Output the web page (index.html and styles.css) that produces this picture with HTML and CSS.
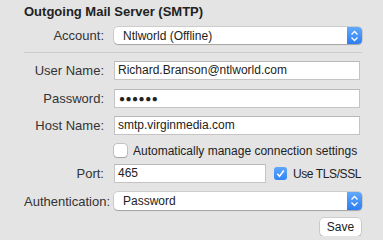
FILE: index.html
```html
<!DOCTYPE html>
<html lang="en">
<head>
  <meta charset="UTF-8" />
  <title>Outgoing Mail Server</title>
  <link rel="stylesheet" href="styles.css">
</head>
<body>
  <div class="panel">
    <h1 class="title">Outgoing Mail Server (SMTP)</h1>

    <div class="row row-account">
      <label class="label">Account:</label>
      <div class="popup">
        <span class="popup-text">Ntlworld (Offline)</span>
        <span class="popup-arrows">
          <svg width="9" height="12" viewBox="0 0 9 12"><path d="M1.5 4.5 L4.5 1.5 L7.5 4.5 M1.5 7.5 L4.5 10.5 L7.5 7.5" fill="none" stroke="#fff" stroke-width="1.3"/></svg>
        </span>
      </div>
    </div>

    <div class="separator"></div>

    <div class="row row-field first">
      <label class="label">User Name:</label>
      <div class="field">Richard.Branson@ntlworld.com</div>
    </div>

    <div class="row row-field">
      <label class="label">Password:</label>
      <div class="field dots">●●●●●●</div>
    </div>

    <div class="row row-field last">
      <label class="label">Host Name:</label>
      <div class="field">smtp.virginmedia.com</div>
    </div>

    <div class="row row-check">
      <span class="label"></span>
      <span class="checkbox"></span>
      <span class="check-text">Automatically manage connection settings</span>
    </div>

    <div class="row row-port">
      <label class="label">Port:</label>
      <div class="field field-port">465</div>
      <span class="checkbox checked">
        <svg width="13" height="13" viewBox="0 0 13 13"><path d="M3.3 6.8 L5.5 9.2 L9.8 3.4" fill="none" stroke="#fff" stroke-width="1.6"/></svg>
      </span>
      <span class="check-text tls">Use TLS/SSL</span>
    </div>

    <div class="row row-auth">
      <label class="label">Authentication:</label>
      <div class="popup">
        <span class="popup-text">Password</span>
        <span class="popup-arrows">
          <svg width="9" height="12" viewBox="0 0 9 12"><path d="M1.5 4.5 L4.5 1.5 L7.5 4.5 M1.5 7.5 L4.5 10.5 L7.5 7.5" fill="none" stroke="#fff" stroke-width="1.3"/></svg>
        </span>
      </div>
    </div>

    <div class="actions">
      <button class="button">Save</button>
    </div>
  </div>
</body>
</html>
```

FILE: styles.css
```css
body {
  margin: 0;
  background-color: #e4e4e4;
  color: #222;
  font-family: 'Liberation Sans', Arial, sans-serif;
  font-size: 13px;
}

.panel {
  width: 338px;
  padding: 4px 0 0 24px;
}

.title {
  margin: 0;
  font-size: 13px;
  line-height: 16px;
  font-weight: bold;
  color: #222;
}

.row {
  display: flex;
  align-items: center;
}

.row > * {
  flex-shrink: 0;
}

.label {
  width: 80px;
  margin-right: 10px;
  text-align: right;
  color: #333;
}

.row-account {
  margin-top: 7px;
  height: 17px;
}

.separator {
  margin-top: 8px;
  height: 1px;
  background-color: #cbcbcb;
}

.row-field {
  margin-top: 9px;
  height: 19px;
}

.row-field.first {
  margin-top: 8px;
}

.row-field.last {
  margin-top: 8px;
}

.field {
  box-sizing: border-box;
  width: 246px;
  height: 19px;
  padding: 0 3px;
  font-size: 12px;
  line-height: 17px;
  background: #fff;
  border: 1px solid #c4c4c4;
  border-top-color: #b8b8b8;
  color: #222;
  white-space: nowrap;
}

.dots {
  font-size: 10px;
  letter-spacing: 0.5px;
  padding-left: 4px;
}

.popup {
  box-sizing: border-box;
  display: flex;
  align-items: center;
  width: 248px;
  height: 17px;
  background: #fff;
  border-radius: 4px;
  box-shadow: 0 0 0 0.5px rgba(0, 0, 0, 0.2), 0 1px 1px rgba(0, 0, 0, 0.2);
  overflow: hidden;
}

.popup-text {
  flex: 1;
  padding-left: 9px;
  font-size: 12px;
  color: #222;
}

.popup-arrows {
  display: flex;
  align-items: center;
  justify-content: center;
  width: 15px;
  height: 100%;
  background: linear-gradient(#62a8fb, #2c7ef3);
}

.row-check {
  margin-top: 9px;
  height: 13px;
}

.checkbox {
  box-sizing: border-box;
  display: flex;
  width: 13px;
  height: 13px;
  margin-right: 6px;
  background: #fff;
  border-radius: 3px;
  box-shadow: 0 0 0 0.5px rgba(0, 0, 0, 0.3), 0 1px 1px rgba(0, 0, 0, 0.15);
}

.checkbox.checked {
  background: linear-gradient(#5ea6fb, #3186f5);
  box-shadow: none;
}

.check-text {
  font-size: 12px;
  color: #222;
  white-space: nowrap;
}

.check-text.tls {
  letter-spacing: -0.4px;
}

.row-port {
  margin-top: 7px;
  height: 19px;
}

.field-port {
  width: 152px;
  margin-right: 8px;
}

.row-auth {
  margin-top: 9px;
  height: 18px;
}

.row-auth .popup {
  height: 18px;
}

.actions {
  display: flex;
  justify-content: flex-end;
  width: 337px;
  margin-top: 8px;
}

.button {
  box-sizing: border-box;
  width: 41px;
  height: 18px;
  padding: 0;
  font-family: inherit;
  font-size: 12px;
  color: #222;
  background: #fff;
  border: none;
  border-radius: 4px;
  box-shadow: 0 0 0 0.5px rgba(0, 0, 0, 0.2), 0 1px 1px rgba(0, 0, 0, 0.2);
}
```
